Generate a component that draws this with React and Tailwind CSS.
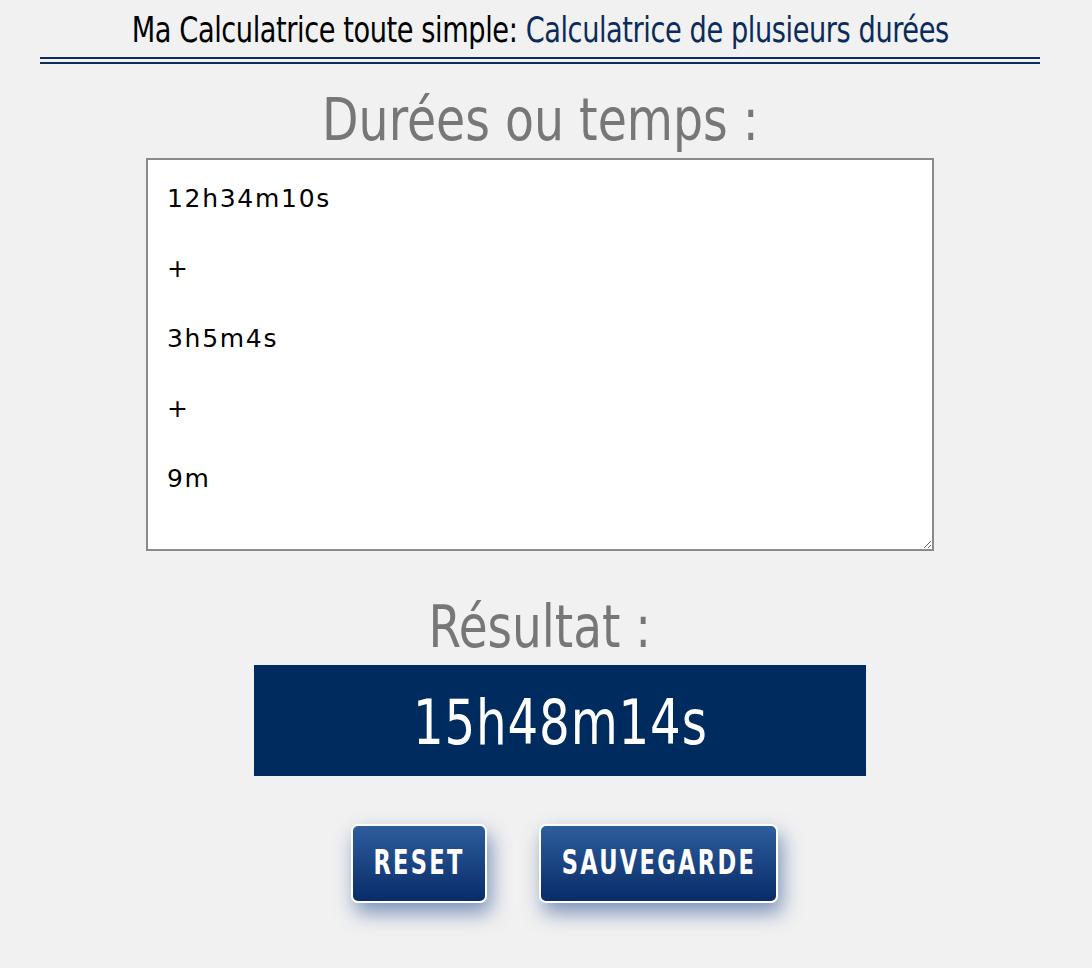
import React from "react";

export default function App() {
  const value = "12h34m10s\n\n+\n\n3h5m4s\n\n+\n\n9m";

  return (
    <div className="min-h-[968px] w-full bg-[#f1f1f1] pt-[8px] font-['DejaVu_Sans',sans-serif] [font-stretch:condensed]">
      <div className="ml-[40px] w-[1000px] flex flex-col items-center">
        {/* Header */}
        <h1 className="flex justify-center text-[36px] leading-[44px] text-black tracking-[-0.5px] whitespace-nowrap">
          <span className="inline-block shrink-0 [transform:scaleX(0.84)]">
            Ma Calculatrice toute simple:{" "}
            <span className="text-[#0b2b5b]">Calculatrice de plusieurs durées</span>
          </span>
        </h1>
        <div className="mt-[5px] w-full h-[6.5px] border-y-[2.5px] border-[#0b2d5c]" />

        {/* Durées */}
        <h2 className="mt-[24px] flex justify-center text-[58px] leading-[64px] text-[#777777] whitespace-nowrap">
          <span className="inline-block shrink-0 [transform:scaleX(0.908)]">Durées ou temps :</span>
        </h2>
        <textarea
          defaultValue={value}
          className="mt-[6px] w-[788px] h-[393px] bg-white border-2 border-[#8a8a8a] pl-[19px] pr-[21px] py-[21px] text-[25px] leading-[35px] tracking-[1.7px] text-black outline-none font-['DejaVu_Sans','Verdana',sans-serif] [font-stretch:normal]"
        />

        {/* Résultat */}
        <h2 className="mt-[44px] flex justify-center text-[58px] leading-[64px] text-[#777777] whitespace-nowrap">
          <span className="inline-block shrink-0 [transform:scaleX(0.9)]">Résultat :</span>
        </h2>
        <div className="ml-[40px] mt-[6px] w-[612px] h-[111px] pt-[6px] bg-[#002b5e] flex items-center justify-center">
          <span className="inline-block shrink-0 [transform:scaleX(0.865)] text-[62px] leading-none text-white tracking-[1px] whitespace-nowrap">
            15h48m14s
          </span>
        </div>

        {/* Buttons */}
        <div className="ml-[49px] mt-[48px] flex gap-[52px]">
          <button className="w-[136px] h-[79px] flex items-center justify-center rounded-[7px] border-2 border-white bg-gradient-to-b from-[#2e5d9d] to-[#082c68] text-white text-[33px] font-bold tracking-[3px] [font-stretch:condensed] shadow-[4px_10px_20px_rgba(30,70,140,0.55)]">
            <span className="inline-block shrink-0 whitespace-nowrap [transform:scaleX(0.76)]">RESET</span>
          </button>
          <button className="w-[239px] h-[79px] flex items-center justify-center rounded-[7px] border-2 border-white bg-gradient-to-b from-[#2e5d9d] to-[#082c68] text-white text-[33px] font-bold tracking-[3px] [font-stretch:condensed] shadow-[4px_10px_20px_rgba(30,70,140,0.55)]">
            <span className="inline-block shrink-0 whitespace-nowrap [transform:scaleX(0.76)]">SAUVEGARDE</span>
          </button>
        </div>
      </div>
    </div>
  );
}
